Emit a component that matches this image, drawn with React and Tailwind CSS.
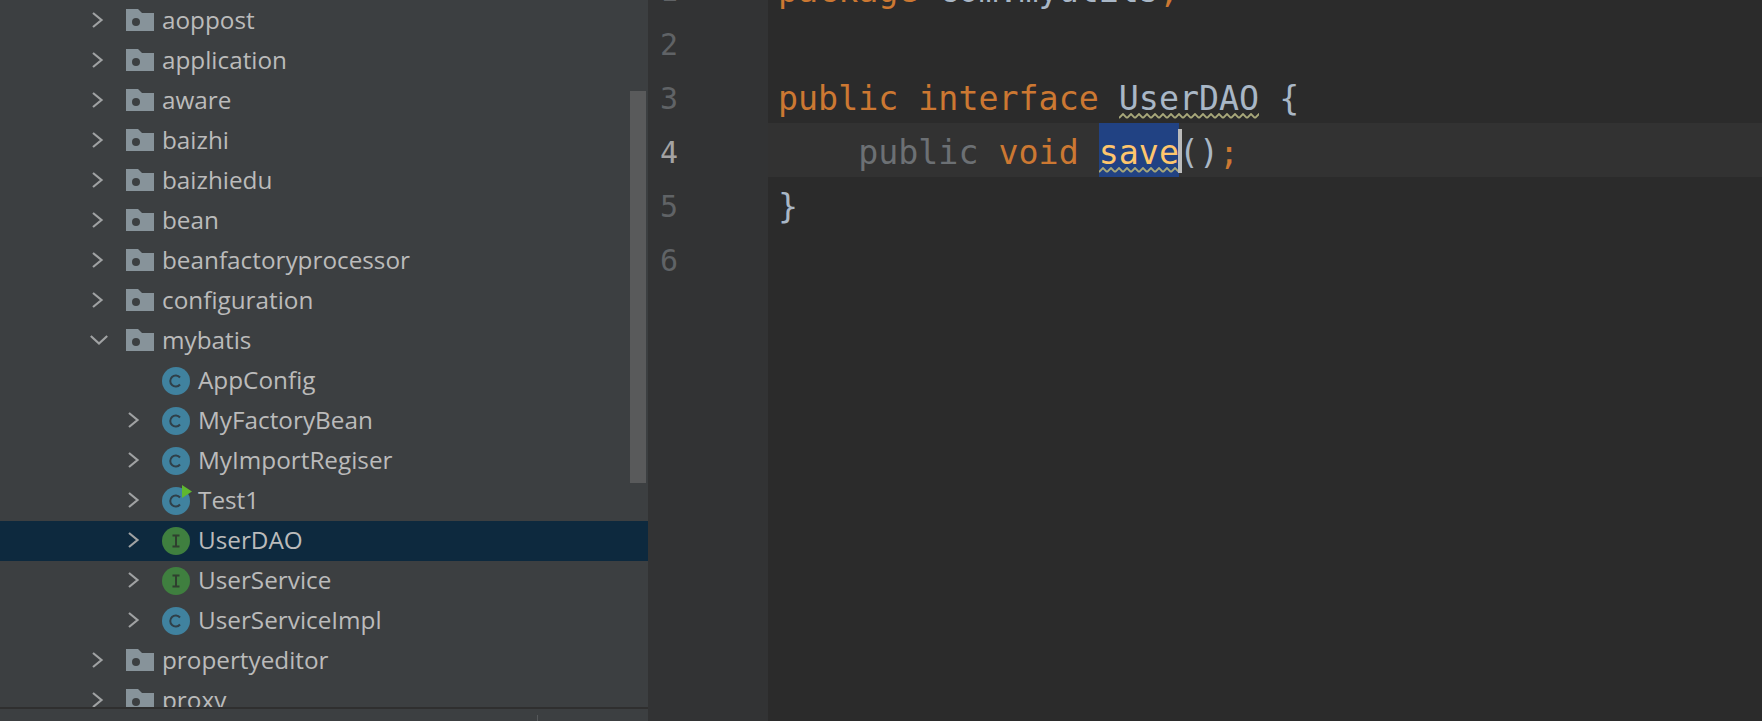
import React from "react";

const Chevron = ({ open }) => (
  <svg width="18" height="18" viewBox="0 0 18 18" fill="none" stroke="#a0a2a3" strokeWidth="2.2" className="shrink-0 -my-px">
    {open ? <path d="M0.8 5L9 12.5L17.2 5" /> : <path d="M3 2L11.5 9L3 16" />}
  </svg>
);

const Folder = () => (
  <svg width="28" height="22" viewBox="0 0 28 22" className="shrink-0">
    <path d="M0 0h12l4 4h12v18H0z" fill="#87939a" />
    <circle cx="10" cy="13" r="4" fill="#3c3f41" />
  </svg>
);

const ClassIcon = ({ run }) => (
  <div className="relative shrink-0 w-7 h-7 mt-[2px]">
    <svg width="28" height="28" viewBox="0 0 28 28" className="block">
      <circle cx="14" cy="14" r="14" fill="#40829f" />
      <path d="M18 10.5A5.5 5.5 0 1 0 18 17.5" fill="none" stroke="#2f3f48" strokeWidth="2" />
    </svg>
    {run && (
      <svg width="11" height="14" viewBox="0 0 11 14" className="absolute left-5 -top-0.5">
        <path d="M0 0l10 6.5L0 13z" fill="#5fb82f" />
      </svg>
    )}
  </div>
);

const InterfaceIcon = () => (
  <svg width="28" height="28" viewBox="0 0 28 28" className="shrink-0 mt-[2px]">
    <circle cx="14" cy="14" r="14" fill="#3f7f3f" />
    <path d="M10.5 8.5h7M14 8.5v11M10.5 19.5h7" fill="none" stroke="#2f3f2f" strokeWidth="2" />
  </svg>
);

const folders1 = ["aoppost", "application", "aware", "baizhi", "baizhiedu", "bean", "beanfactoryprocessor", "configuration"];
const files = [
  { n: "AppConfig", c: false },
  { n: "MyFactoryBean", c: true },
  { n: "MyImportRegiser", c: true },
  { n: "Test1", c: true, run: true },
  { n: "UserDAO", c: true, i: true, sel: true },
  { n: "UserService", c: true, i: true },
  { n: "UserServiceImpl", c: true },
];

const FolderRow = ({ name, open }) => (
  <div className="h-10 shrink-0 flex items-center pl-[90px] pb-[2px]">
    <div className="w-[36px] shrink-0 flex"><Chevron open={open} /></div>
    <Folder />
    <span className="ml-[8px]">{name}</span>
  </div>
);

const FileRow = ({ f }) => (
  <div className={`h-10 shrink-0 flex items-center pl-[126px] pb-[2px] ${f.sel ? "bg-[#0d293e]" : ""}`}>
    <div className="w-[36px] shrink-0 flex"><div className="w-[18px] h-4">{f.c && <Chevron />}</div></div>
    {f.i ? <InterfaceIcon /> : <ClassIcon run={f.run} />}
    <span className="ml-[8px]">{f.n}</span>
  </div>
);

const Squiggle = ({ className }) => (
  <div
    className={`absolute left-0 right-0 h-[6px] ${className}`}
    style={{
      backgroundImage:
        "url(\"data:image/svg+xml,%3Csvg xmlns='http://www.w3.org/2000/svg' width='8' height='6'%3E%3Cpath d='M0 5L4 1L8 5' fill='none' stroke='%23a8a87a' stroke-width='1.8'/%3E%3C/svg%3E\")",
    }}
  />
);

const lines = [
  <span className="text-[#cc7832]">package <span className="text-[#a9b7c6]">com.myutils</span>;</span>,
  null,
  <span>
    <span className="text-[#cc7832]">public interface </span>
    <span className="relative text-[#a9b7c6]">UserDAO<Squiggle className="bottom-[-1px]" /></span>
    <span className="text-[#a9b7c6]"> {"{"}</span>
  </span>,
  <span>
    <span className="text-[#6c7074]">    public </span>
    <span className="text-[#cc7832]">void </span>
    <span className="relative inline-block h-[54px] align-top bg-[#214283] text-[#ffc66d]">
      save
      <Squiggle className="bottom-[4px]" />
      <span className="absolute right-[-3px] top-[6px] w-[4px] h-[44px] bg-[#bbbbbb]" />
    </span>
    <span className="text-[#a9b7c6]">()</span>
    <span className="text-[#cc7832]">;</span>
  </span>,
  <span className="text-[#a9b7c6]">{"}"}</span>,
  null,
];

export default function App() {
  return (
    <div className="w-[1762px] h-[721px] flex overflow-hidden bg-[#2b2b2b]">
      <div className="relative w-[648px] shrink-0 h-full flex flex-col bg-[#3c3f41] text-[#bbbbbb] text-[24.3px] font-['Open_Sans','Noto_Sans',sans-serif]">
        <div className="flex-1 min-h-0 overflow-hidden flex flex-col pt-px">
          {folders1.map((n) => <FolderRow key={n} name={n} />)}
          <FolderRow name="mybatis" open />
          {files.map((f) => <FileRow key={f.n} f={f} />)}
          <FolderRow name="propertyeditor" />
          <FolderRow name="proxy" />
        </div>
        <div className="h-[14px] shrink-0 border-t-2 border-[#2f2f2f] flex items-end pl-[537px]">
          <div className="w-px h-[6px] bg-[#55585a]" />
        </div>
        <div className="absolute right-[2px] top-[91px] w-[16px] h-[392px] bg-[#595a5b]" />
      </div>

      <div className="w-[120px] shrink-0 self-start h-[760px] bg-[#323334] flex flex-col mt-[-39px] font-['DejaVu_Sans_Mono',monospace] text-[30px] text-[#606366] pl-[12px]">
        {[1, 2, 3, 4, 5, 6].map((n) => (
          <div key={n} className={`h-[54px] shrink-0 leading-[60px] ${n === 4 ? "text-[#a4a3a3]" : ""}`}>{n}</div>
        ))}
      </div>

      <div className="flex-1 self-start h-[760px] flex flex-col mt-[-39px] font-['DejaVu_Sans_Mono',monospace] text-[33.3px] whitespace-pre">
        {lines.map((l, i) => (
          <div key={i} className={`h-[54px] shrink-0 leading-[60px] pl-[10px] ${i === 3 ? "bg-[#323232]" : ""}`}>{l}</div>
        ))}
      </div>
    </div>
  );
}
